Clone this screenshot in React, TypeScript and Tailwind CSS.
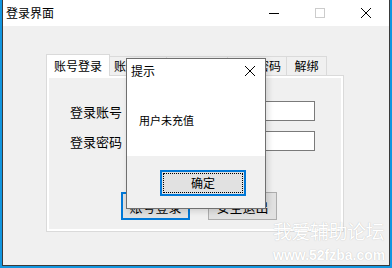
import React from "react";

const cjk = "font-['Noto_Sans_CJK_SC','Noto_Sans',sans-serif]";

function CaptionButtons() {
  return (
    <div className="ml-auto flex h-full">
      <div className="flex h-full w-[46px] items-center justify-center">
        <div className="h-px w-[10px] bg-black" />
      </div>
      <div className="flex h-full w-[46px] items-center justify-center">
        <div className="h-[10px] w-[10px] border border-[#cccccc]" />
      </div>
      <div className="flex h-full w-[46px] items-center justify-center">
        <svg width="10" height="10" viewBox="0 0 10 10">
          <path d="M0 0L10 10M10 0L0 10" stroke="#000" strokeWidth="1" />
        </svg>
      </div>
    </div>
  );
}

function Tabs() {
  const others = [
    { label: "账号注册", w: "w-[57px]" },
    { label: "卡密充值", w: "w-[61px]" },
    { label: "修改密码", w: "w-[59px]" },
    { label: "解绑", w: "w-[40px]" },
  ];
  return (
    <div className="flex h-[21px] items-end">
      <div className="relative z-10 -mb-px flex h-[22px] w-[64px] items-center justify-center border border-b-0 border-[#dadada] bg-white text-[12px] leading-none text-black">
        账号登录
      </div>
      {others.map((t) => (
        <div
          key={t.label}
          className={`flex h-[19px] ${t.w} items-center justify-center border-t border-r border-[#dadada] bg-[#f0f0f0] text-[12px] leading-none text-black`}
        >
          {t.label}
        </div>
      ))}
    </div>
  );
}

function LoginPanel() {
  return (
    <div className="h-[157px] w-[298px] border border-[#dadada] bg-white">
      <div className="h-full border-2 border-white bg-[#f0f0f0] pl-[21px] pt-[23px]">
        <div className="flex h-[20px] items-center">
          <span className="w-[65px] text-[13px] leading-none text-black">登录账号</span>
          <div className="h-[20px] w-[180px] border border-[#7a7a7a] bg-white" />
        </div>
        <div className="mt-[10px] flex h-[20px] items-center">
          <span className="w-[65px] text-[13px] leading-none text-black">登录密码</span>
          <div className="h-[20px] w-[180px] border border-[#7a7a7a] bg-white" />
        </div>
        <div className="ml-[51px] mt-[41px] flex gap-[18px]">
          <button className="flex h-[28px] w-[69px] items-center justify-center border-2 border-[#0078d7] bg-[#e1e1e1] text-[13px] leading-none text-black">
            账号登录
          </button>
          <button className="flex h-[28px] w-[69px] items-center justify-center border border-[#adadad] bg-[#e1e1e1] text-[13px] leading-none text-black">
            安全退出
          </button>
        </div>
      </div>
    </div>
  );
}

function MessageBox() {
  return (
    <div className="absolute left-[126px] top-[58px] flex h-[151px] w-[140px] flex-col border border-[#6f6f6f] bg-white shadow-[2px_2px_6px_rgba(0,0,0,0.15)]">
      <div className="flex h-[97px] flex-col bg-white">
        <div className="flex h-[23px] items-center pl-[4px] pr-[10px]">
          <span className="text-[12px] leading-none text-black">提示</span>
          <svg className="ml-auto" width="10" height="10" viewBox="0 0 10 10">
            <path d="M0 0L10 10M10 0L0 10" stroke="#000" strokeWidth="1" />
          </svg>
        </div>
        <p className="mt-[31px] pl-[12px] text-[11px] leading-[14px] text-black">用户未充值</p>
      </div>
      <div className="flex-1 bg-[#f0f0f0] pl-[33px] pt-[13px]">
        <button className="h-[26px] w-[86px] border-2 border-[#0078d7] bg-[#e1e1e1] p-px">
          <div className="flex h-full w-full items-center justify-center border border-dotted border-black text-[12px] leading-none text-black">
            确定
          </div>
        </button>
      </div>
    </div>
  );
}

export default function App() {
  return (
    <div className={`relative h-[268px] w-[392px] overflow-hidden bg-[#1296e0] ${cjk}`}>
      <div className="ml-[2px] flex h-[266px] w-[388px] flex-col border-x border-b border-[#3a3a3a]">
        <div className="flex h-[26px] items-center bg-white">
          <span className="pl-[3px] text-[12px] leading-none text-black">登录界面</span>
          <CaptionButtons />
        </div>
        <div className="flex-1 bg-[#f0f0f0] pl-[43px] pt-[28px]">
          <Tabs />
          <LoginPanel />
        </div>
      </div>

      <MessageBox />

      {/* watermark */}
      <div className="absolute left-[273px] top-[221px] flex flex-col text-white [text-shadow:0_0_1px_rgba(0,0,0,0.25)]">
        <span className="text-[19px] leading-[19px] tracking-[-0.5px]">我爱辅助论坛</span>
        <span className="mt-[8px] font-['Liberation_Sans',sans-serif] text-[14px] font-bold leading-[14px]">
          www.52fzba.com
        </span>
      </div>
    </div>
  );
}
